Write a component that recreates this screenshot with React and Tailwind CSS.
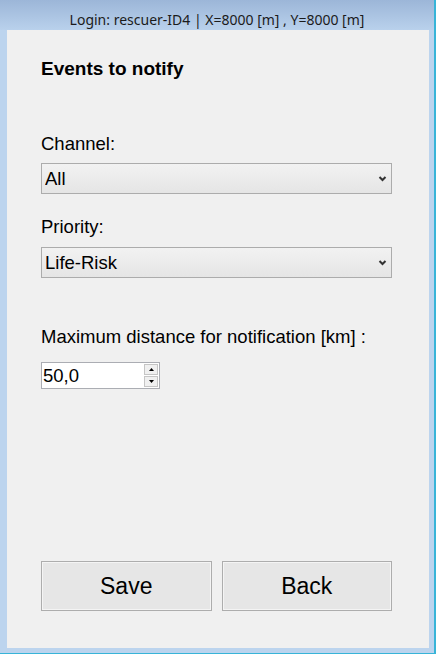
import React, { useState } from "react";

function Chevron() {
  return (
    <svg width="9" height="7" viewBox="0 0 9 7" className="pointer-events-none absolute right-[5px] top-1/2 -translate-y-1/2">
      <path d="M1.5 1.5 L4.5 4.5 L7.5 1.5" fill="none" stroke="#333" strokeWidth="2" />
    </svg>
  );
}

function Combo({ value, options, onChange }) {
  return (
    <div className="relative h-[31px]">
      <select
        value={value}
        onChange={(e) => onChange(e.target.value)}
        className="appearance-none w-full h-full border border-[#acacac] bg-gradient-to-b from-[#f2f2f2] to-[#e5e5e5] pl-[3px] pr-6 text-[18.5px] text-black outline-none rounded-none"
      >
        {options.map((o) => (
          <option key={o}>{o}</option>
        ))}
      </select>
      <Chevron />
    </div>
  );
}

export default function App() {
  const [channel, setChannel] = useState("All");
  const [priority, setPriority] = useState("Life-Risk");
  const [distance, setDistance] = useState("50,0");

  return (
    <div
      className="w-[436px] h-[654px] flex flex-col bg-[#bcd4ee] border-r-2 border-b border-r-[#37b4d8] border-b-[#37b4d8] overflow-hidden"
      style={{ fontFamily: '"Liberation Sans", Arial, sans-serif' }}
    >
      {/* title bar */}
      <div className="h-[30px] shrink-0 flex items-center justify-center bg-gradient-to-b from-[#9cb6d8] to-[#b9d1ec]">
        <span className="text-[14px] text-[#1b1b1b] pt-[8px]" style={{ fontFamily: '"Noto Sans", "Open Sans", sans-serif' }}>
          Login: rescuer-ID4 | X=8000 [m] , Y=8000 [m]
        </span>
      </div>

      <main className="flex-1 flex flex-col ml-[7px] mr-[5px] mb-[5px] bg-[#f0f0f0] pl-[34px] pr-[37px] pt-[28px] pb-[37px] text-black">
        <h1 className="text-[19px] leading-[22px] font-bold">Events to notify</h1>

        <label className="mt-[53px] text-[18.5px] leading-[21px]">Channel:</label>
        <div className="mt-[9px]">
          <Combo value={channel} options={["All", "Fire", "Medical", "Police"]} onChange={setChannel} />
        </div>

        <label className="mt-[22px] text-[18.5px] leading-[21px]">Priority:</label>
        <div className="mt-[10px]">
          <Combo value={priority} options={["Life-Risk", "High", "Medium", "Low"]} onChange={setPriority} />
        </div>

        <label className="mt-[48px] text-[18.5px] leading-[21px]">Maximum distance for notification [km] :</label>
        <div className="mt-[15px] w-[119px] h-[27px] flex border border-[#abadb3] bg-white">
          <input
            value={distance}
            onChange={(e) => setDistance(e.target.value)}
            className="flex-1 min-w-0 px-[1px] text-[18.5px] outline-none bg-transparent"
          />
          <div className="w-[14px] flex flex-col gap-[1px] my-[1px] mr-[1px]">
            <button className="flex-1 flex items-center justify-center border border-[#c5c5c5] bg-[#f0f0f0]">
              <svg width="5" height="3" viewBox="0 0 5 3"><path d="M0 3 L2.5 0 L5 3 Z" fill="#000" /></svg>
            </button>
            <button className="flex-1 flex items-center justify-center border border-[#c5c5c5] bg-[#f0f0f0]">
              <svg width="5" height="3" viewBox="0 0 5 3"><path d="M0 0 L2.5 3 L5 0 Z" fill="#000" /></svg>
            </button>
          </div>
        </div>

        <div className="mt-auto grid grid-cols-2 gap-[10px]">
          <button className="h-[50px] border border-[#adadad] bg-[#e6e6e6] shadow-[inset_0_0_0_1px_#f4f4f4] text-[23px]">
            Save
          </button>
          <button className="h-[50px] border border-[#adadad] bg-[#e6e6e6] shadow-[inset_0_0_0_1px_#f4f4f4] text-[23px]">
            Back
          </button>
        </div>
      </main>
    </div>
  );
}
